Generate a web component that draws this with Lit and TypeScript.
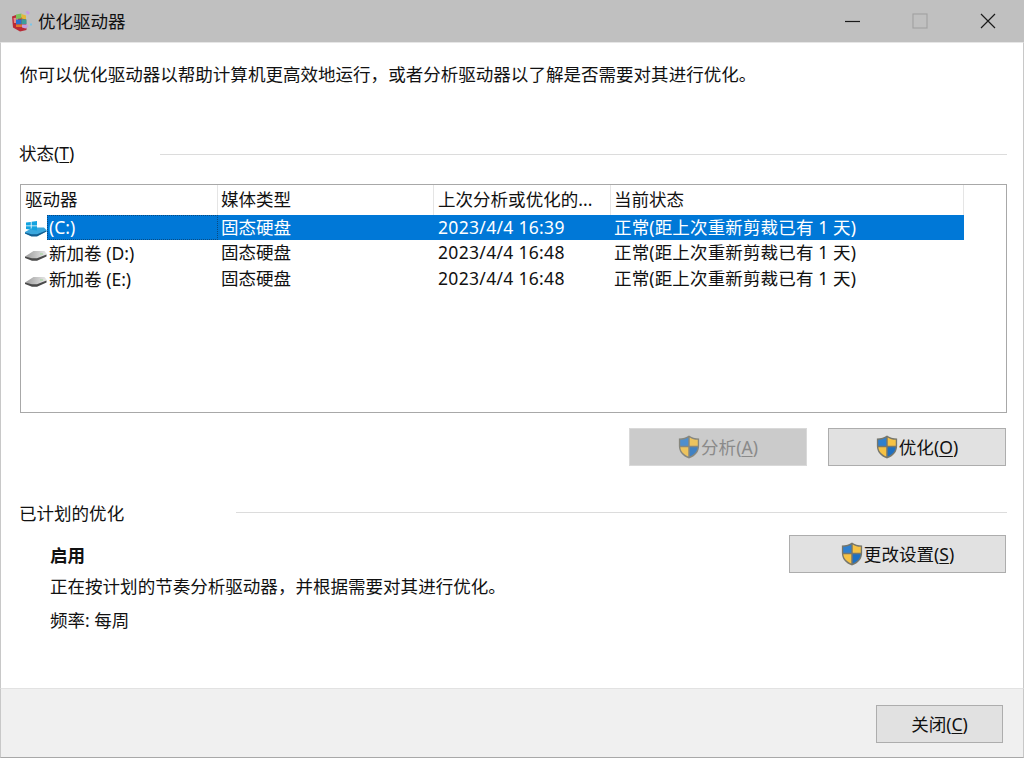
import { LitElement, html, css, svg } from "lit";
import { customElement } from "lit/decorators.js";

const shield = (dim = false) => html`<svg class="shield ${dim ? "dim" : ""}" width="22" height="24" viewBox="0 0 21 23">
  <path d="M10.500 0.500C8 2.300 4.500 3.300 0.800 3.400V10.500C0.800 16 4.300 20.300 10.500 22.500 16.700 20.300 20.200 16 20.200 10.500V3.400C16.500 3.300 13 2.300 10.500 0.500Z" fill="#77776c"/>
  <path d="M9.800 2.300C7.600 3.700 5 4.400 2.100 4.600V10.300H9.800Z" fill="#2f80cf"/>
  <path d="M11.200 2.300C13.400 3.700 16 4.400 18.900 4.600V10.300H11.200Z" fill="#f6c244"/>
  <path d="M2.200 11.700H9.800V20.600C5.300 18.700 2.600 15.600 2.200 11.700Z" fill="#f6c244"/>
  <path d="M18.800 11.700H11.200V20.600C15.700 18.700 18.400 15.600 18.800 11.700Z" fill="#1f6fc0"/>
</svg>`;

const grayDrive = svg`
  <defs><linearGradient id="gd" x1="0" x2="1" y1="0" y2="0"><stop offset="0" stop-color="#9c9c9c"/><stop offset="1" stop-color="#e8e8e8"/></linearGradient></defs>
  <path d="M1 12.500L9.500 7H20.500L22.500 9.500V12L13 16H8Z" fill="url(#gd)"/>
  <path d="M1 12.500L8 14.200H13L22.500 10.500V12.500L13 16.800H8L1 14Z" fill="#4a4a4a"/>
  <rect x="16" y="9.500" width="3" height="1" fill="#9ed896"/>`;

const winDrive = svg`
  <path d="M1 14L9 9.500H20L22.500 12V13.500L13 18H7.500L1 15.500Z" fill="#3ba7dd"/>
  <path d="M1 14.500L7.500 16.300H13L22.500 12.500V13.500L13 18.500H7.500L1 15.500Z" fill="#135f92"/>
  <path d="M2 4.600L6.800 3.900V7.400H2ZM7.600 3.800L13 3V7.400H7.600ZM2 8.200H6.800V11.700L2 11ZM7.600 8.200H13V12.400L7.600 11.700Z" fill="#12a3e0"/>`;

const driveIcon = (win: boolean) => html`<svg class="drive" width="24" height="19" viewBox="0 0 24 19">${win ? winDrive : grayDrive}</svg>`;

const rows = [
  { win: true, name: "(C:)", date: "2023/4/4 16:39", sel: true },
  { win: false, name: "新加卷 (D:)", date: "2023/4/4 16:48", sel: false },
  { win: false, name: "新加卷 (E:)", date: "2023/4/4 16:48", sel: false },
];

@customElement("app-root")
export class AppRoot extends LitElement {
  static styles = css`
    :host {
      display: flex;
      flex-direction: column;
      width: 1024px;
      height: 758px;
      box-sizing: border-box;
      font-family: "Noto Sans", "Noto Sans CJK SC", sans-serif;
      font-size: 17.55px;
      line-height: 24px;
      color: #111;
      background: #fff;
      overflow: hidden;
    }
    .titlebar {
      height: 42px;
      flex: none;
      background: #c0c0c0;
      display: flex;
      align-items: center;
      padding-left: 11px;
      box-sizing: border-box;
    }
    .appicon { flex: none; margin-right: 5px; }
    .title { flex: 1; }
    .winbtn { width: 68px; height: 42px; display: flex; align-items: center; justify-content: center; flex: none; }
    .winbtns { display: flex; margin-right: 2px; }
    .body {
      flex: 1;
      border-left: 1px solid #c8c8c8;
      border-right: 1px solid #c8c8c8;
      padding: 19px 16px 0 19px;
      display: flex;
      flex-direction: column;
      min-height: 0;
      border-top: 1px solid #e6e6e6;
    }
    .intro { height: 24px; white-space: nowrap; }
    .group { display: flex; align-items: center; height: 24px; margin-left: -1px; }
    .group .rule { flex: 1; height: 1px; background: #dcdcdc; }
    .g1 { margin-top: 56px; }
    .g1 span { margin-top: -2px; }
    .g1 .rule { margin-left: 86px; }
    .list {
      margin-top: 18px;
      height: 229px;
      box-sizing: border-box;
      border: 1px solid #a8a8a8;
      width: 987px;
    }
    .head, .row { display: grid; grid-template-columns: 197px 216px 177px 353px; width: 943px; }
    .head { height: 30px; }
    .head > div {
      border-right: 1px solid #e5e5e5;
      box-sizing: border-box;
      line-height: 28px;
      white-space: nowrap;
      overflow: hidden;
    }
    .head > div:nth-child(1) { padding-left: 4px; }
    .head > div:nth-child(2), .row > div:nth-child(2) { padding-left: 3px; }
    .head > div:nth-child(3), .row > div:nth-child(3) { padding-left: 4px; }
    .head > div:nth-child(4), .row > div:nth-child(4) { padding-left: 3px; }
    .rows { display: flex; flex-direction: column; }
    .row { height: 26px; line-height: 25px; white-space: nowrap; }
    .row > div { box-sizing: border-box; }
    .row .c1 { display: flex; align-items: center; }
    .date { letter-spacing: 0.3px; }
    .status { letter-spacing: 0.12px; }
    .drive { flex: none; margin: 0 -1px 0 3px; }
    .name { flex: 1; padding-left: 2px; height: 25px; }
    .row.sel { height: 25px; color: #fff; line-height: 24px; }
    .row.sel .name { background: #0078d7; outline: 1px dotted #0a4a80; outline-offset: -1px; }
    .row.sel > div:not(.c1) { background: #0078d7; }
    .actions { display: flex; justify-content: flex-end; gap: 21px; margin-top: 15px; margin-right: 1px; }
    .btn {
      height: 38px;
      box-sizing: border-box;
      border: 1px solid #adadad;
      background: #e1e1e1;
      display: flex;
      align-items: center;
      justify-content: center;
      white-space: nowrap;
      flex: none;
    }
    .b178 { width: 178px; }
    .b217 { width: 217px; }
    .b127 { width: 127px; }
    .btn.off { background: #cbcbcb; border-color: #d9d9d9; color: #8a8a8a; }
    .shield { flex: none; margin-right: 1px; margin-top: -1px; }
    .dim { opacity: 0.8; }
    u { text-underline-offset: 2px; text-decoration-thickness: 1px; }
    .g2 { margin-top: 35px; }
    .g2 .rule { margin-left: 112px; margin-top: -2px; }
    .sched { display: flex; justify-content: space-between; padding-left: 30px; margin-right: 1px; }
    .info { padding-top: 18px; }
    .info div { height: 24px; }
    .info .t2 { margin-top: 7px; }
    .info .t3 { margin-top: 10px; }
    .info b { font-weight: 700; }
    .sched .btn { margin-top: 10px; }
    .footer {
      height: 70px;
      flex: none;
      background: #f0f0f0;
      border-top: 1px solid #e2e2e2;
      border-left: 1px solid #c8c8c8;
      border-right: 1px solid #c8c8c8;
      border-bottom: 1px solid #a8a8a8;
      box-sizing: border-box;
      display: flex;
      justify-content: flex-end;
      padding: 16px 20px 0 0;
    }
  `;

  render() {
    return html`
      <div class="titlebar">
        <svg class="appicon" width="22" height="22" viewBox="0 0 22 22">
          <path d="M1 6.500L5 5 15 8.500 15.500 20 9 21.500 2 17.500Z" fill="#b92a36"/>
          <path d="M2.500 8L7 7.500 7 13 3 13Z" fill="#e58a8a"/>
          <path d="M5 4.500L10.500 3.500 10.500 8.500 5 9Z" fill="#7cc05c"/>
          <path d="M10.500 4L15 5.500 15 9.500 10.500 8.500Z" fill="#e2b93a"/>
          <path d="M5 9.500H10.500V14.500H5Z" fill="#2a6fd0"/>
          <path d="M10.500 9L15.500 9.500 15.500 14 10.500 14.500Z" fill="#3d9e9a"/>
          <path d="M5 14.500H11V17H5Z" fill="#e0762e"/>
          <path d="M11 14.500H16L17.500 16.500 14.500 18.500 11 17.500Z" fill="#c4a0e0"/>
          <path d="M14.500 2L16.500 0.800 19 3 17 5Z" fill="#c79ae6"/>
          <rect x="19" y="13.500" width="2" height="2" fill="#7cc5e8"/>
        </svg>
        <div class="title">优化驱动器</div>
        <div class="winbtns">
          <div class="winbtn"><svg width="20" height="20" viewBox="0 0 20 20"><path d="M3 10.500H18" stroke="#1a1a1a" stroke-width="1.200" fill="none"/></svg></div>
          <div class="winbtn"><svg width="16" height="16" viewBox="0 0 16 16"><rect x="1" y="1" width="14" height="14" stroke="#a3a3a3" stroke-width="1.200" fill="none"/></svg></div>
          <div class="winbtn"><svg width="16" height="16" viewBox="0 0 16 16"><path d="M1 1L15 15M15 1L1 15" stroke="#1a1a1a" stroke-width="1.200" fill="none"/></svg></div>
        </div>
      </div>
      <div class="body">
        <div class="intro">你可以优化驱动器以帮助计算机更高效地运行，或者分析驱动器以了解是否需要对其进行优化。</div>
        <div class="group g1"><span>状态(<u>T</u>)</span><div class="rule"></div></div>
        <div class="list">
          <div class="head">
            <div>驱动器</div><div>媒体类型</div><div>上次分析或优化的...</div><div>当前状态</div>
          </div>
          <div class="rows">
            ${rows.map(
              (r) => html`<div class="row ${r.sel ? "sel" : ""}">
                <div class="c1">${driveIcon(r.win)}<div class="name">${r.name}</div></div>
                <div>固态硬盘</div>
                <div class="date">${r.date}</div>
                <div class="status">正常(距上次重新剪裁已有 1 天)</div>
              </div>`
            )}
          </div>
        </div>
        <div class="actions">
          <div class="btn off b178">${shield(true)}分析(<u>A</u>)</div>
          <div class="btn b178">${shield()}优化(<u>O</u>)</div>
        </div>
        <div class="group g2"><span>已计划的优化</span><div class="rule"></div></div>
        <div class="sched">
          <div class="info">
            <div><b>启用</b></div>
            <div class="t2">正在按计划的节奏分析驱动器，并根据需要对其进行优化。</div>
            <div class="t3">频率: 每周</div>
          </div>
          <div class="btn b217">${shield()}更改设置(<u>S</u>)</div>
        </div>
      </div>
      <div class="footer">
        <div class="btn b127">关闭(<u>C</u>)</div>
      </div>
    `;
  }
}
